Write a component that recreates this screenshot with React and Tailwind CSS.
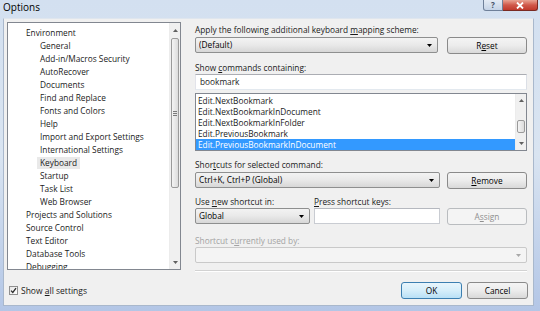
import React from "react";

const U = ({ children }) => <span className="underline underline-offset-[1px] decoration-[0.8px]">{children}</span>;

function Tri({ up = false, color = "#000" }) {
  return (
    <svg width="5" height="3" viewBox="0 0 5 3" className="block">
      <path d={up ? "M0 3H5L2.5 0Z" : "M0 0H5L2.5 3Z"} fill={color} />
    </svg>
  );
}

function Combo({ className = "", children, disabled = false }) {
  const base = disabled
    ? "border-[#c9c9c9] bg-[#f4f4f4] text-[#9a9a9a]"
    : "border-[#8e8f8f] bg-gradient-to-b from-[#f3f3f3] via-[#e9e9e9] to-[#d7d7d7] text-black";
  return (
    <div className={"flex items-center h-[16px] rounded-[2px] border pl-[3px] pr-[5px] " + base + " " + className}>
      <span className="flex-1 truncate leading-[14px]">{children}</span>
      <Tri color={disabled ? "#a8a8a8" : "#000"} />
    </div>
  );
}

function Btn({ className = "", children, variant = "normal" }) {
  let cls = "border-[#8a8a8a] bg-gradient-to-b from-[#f4f4f4] via-[#ececec] to-[#d9d9d9] text-black";
  if (variant === "default") cls = "border-[#3c7fb1] bg-gradient-to-b from-[#e8f5fc] via-[#d6eefa] to-[#b9e0f6] text-black";
  if (variant === "disabled") cls = "border-[#b9bcbf] bg-[#f4f4f4] text-[#8f8f8f]";
  return (
    <div className={"flex items-center justify-center h-[17px] rounded-[3px] border leading-[14px] " + cls + " " + className}>
      {children}
    </div>
  );
}

function VScroll({ upH, downH, thumbTop, thumbH, grip = false }) {
  return (
    <div className="w-[11px] flex flex-col bg-[#f0f0f0] border-l border-[#ececec] shrink-0">
      <div className="flex items-center justify-center shrink-0" style={{ height: upH }}>
        <Tri up color="#606060" />
      </div>
      <div className="flex-1 relative">
        <div
          className="absolute left-[1px] right-[1px] rounded-[2px] border border-[#9a9a9a] bg-gradient-to-r from-[#f4f4f4] to-[#dcdcdc] flex items-center justify-center"
          style={{ top: thumbTop, height: thumbH }}
        >
          {grip && (
            <div className="flex flex-col gap-[1px]">
              <div className="w-[4px] h-[1px] bg-[#7a7a7a]" />
              <div className="w-[4px] h-[1px] bg-[#7a7a7a]" />
              <div className="w-[4px] h-[1px] bg-[#7a7a7a]" />
            </div>
          )}
        </div>
      </div>
      <div className="flex items-center justify-center shrink-0" style={{ height: downH }}>
        <Tri color="#606060" />
      </div>
    </div>
  );
}

const tree = [
  ["Environment", 0],
  ["General", 1],
  ["Add-in/Macros Security", 1],
  ["AutoRecover", 1],
  ["Documents", 1],
  ["Find and Replace", 1],
  ["Fonts and Colors", 1],
  ["Help", 1],
  ["Import and Export Settings", 1],
  ["International Settings", 1],
  ["Keyboard", 1],
  ["Startup", 1],
  ["Task List", 1],
  ["Web Browser", 1],
  ["Projects and Solutions", 0],
  ["Source Control", 0],
  ["Text Editor", 0],
  ["Database Tools", 0],
  ["Debugging", 0],
];

const cmds = [
  "Edit.NextBookmark",
  "Edit.NextBookmarkInDocument",
  "Edit.NextBookmarkInFolder",
  "Edit.PreviousBookmark",
  "Edit.PreviousBookmarkInDocument",
];

export default function App() {
  return (
    <div className="w-[540px] h-[311px] overflow-hidden flex flex-col bg-gradient-to-b from-[#d3e0f0] via-[#d9e4f1] to-[#b3c6e6] font-['Open_Sans',sans-serif] text-[8.3px] text-[#1a1a1a]">
      {/* title bar */}
      <div className="h-[18px] shrink-0 flex items-start">
        <span className="pl-[3px] pt-[1px] text-[10px] leading-[13px] text-black">Options</span>
        <div className="ml-auto flex mr-[2px]">
          <div className="w-[20px] h-[11px] rounded-bl-[3px] border border-t-0 border-[#6f8099] bg-gradient-to-b from-[#e4ebf4] to-[#c5d3e6] flex items-center justify-center text-[8px] leading-[8px] font-bold text-[#3f4f66]">
            ?
          </div>
          <div className="w-[35px] h-[11px] rounded-br-[3px] border border-l-0 border-t-0 border-[#7a2a22] bg-gradient-to-b from-[#e8a393] via-[#d0584a] to-[#c0392b] flex items-center justify-center">
            <svg width="8" height="7" viewBox="0 0 8 7">
              <path d="M1 0.5L7 6.5M7 0.5L1 6.5" stroke="#fff" strokeWidth="1.8" />
            </svg>
          </div>
        </div>
      </div>

      {/* client area */}
      <div className="ml-[3px] mr-[6px] h-[288px] shrink-0 bg-[#f0f0f0] border border-[#a9b8cc] border-t-[#dfe6ee] flex flex-col">
        <div className="flex pt-[3px] pl-[3px]">
          {/* tree */}
          <div className="w-[174px] h-[248px] border border-[#828790] bg-white flex overflow-hidden">
            <div className="flex-1 pt-[3px] overflow-hidden">
              {tree.map(([t, lvl]) => (
                <div key={t} className={"h-[13px] leading-[13px] " + (lvl ? "pl-[29px]" : "pl-[15px]")}>
                  <span className={"px-[3px] inline-block h-[12px] leading-[12px] " + (t === "Keyboard" ? "bg-[#e9e9e9]" : "")}>{t}</span>
                </div>
              ))}
            </div>
            <VScroll upH={14} downH={13} thumbTop={1} thumbH={150} grip />
          </div>

          {/* right panel */}
          <div className="ml-[14px] w-[332px] flex flex-col">
            <div className="mt-[2px] h-[11px] leading-[11px]">
              Apply the following additional keyboard <U>m</U>apping scheme:
            </div>
            <div className="mt-[2px] flex items-start">
              <Combo className="w-[243px]">(Default)</Combo>
              <Btn className="ml-[9px] w-[80px]">
                R<U>e</U>set
              </Btn>
            </div>
            <div className="mt-[8px] h-[11px] leading-[11px]">
              Show <U>c</U>ommands containing:
            </div>
            <div className="mt-[1px] h-[16px] border border-[#abadb3] border-l-[#e2e3ea] border-r-[#dbdfe6] border-b-[#e3e9ef] bg-white pl-[4px] leading-[14px]">
              bookmark
            </div>
            <div className="mt-[3px] h-[58px] border border-[#828790] bg-white flex overflow-hidden">
              <div className="flex-1 pt-[1px]">
                {cmds.map((c, i) => (
                  <div
                    key={c}
                    className={"h-[11px] leading-[11px] pl-[2px] " + (i === 4 ? "bg-[#3399ff] text-white" : "")}
                  >
                    {c}
                  </div>
                ))}
              </div>
              <VScroll upH={13} downH={13} thumbTop={13} thumbH={13} />
            </div>
            <div className="mt-[8px] h-[11px] leading-[11px]">
              Shor<U>t</U>cuts for selected command:
            </div>
            <div className="mt-[2px] flex items-start">
              <Combo className="w-[245px]">Ctrl+K, Ctrl+P (Global)</Combo>
              <Btn className="ml-[7px] w-[80px]">
                <U>R</U>emove
              </Btn>
            </div>
            <div className="mt-[7px] h-[11px] leading-[11px] flex">
              <span className="w-[119px]">
                Use <U>n</U>ew shortcut in:
              </span>
              <span>
                <U>P</U>ress shortcut keys:
              </span>
            </div>
            <div className="mt-[1px] flex items-start">
              <Combo className="w-[115px]">Global</Combo>
              <div className="ml-[4px] w-[126px] h-[16px] border border-[#c9ccd2] border-t-[#b5b8bf] bg-white" />
              <Btn variant="disabled" className="ml-[7px] w-[80px] h-[16px]">
                A<U>s</U>sign
              </Btn>
            </div>
            <div className="mt-[10px] h-[11px] leading-[11px] text-[#a3a3a3]">
              Shortcut c<U>u</U>rrently used by:
            </div>
            <div className="mt-[1px]">
              <Combo disabled className="w-[332px]"> </Combo>
            </div>
            <div className="mt-[7px] h-[2px] border-t border-[#d2d2d2] border-b border-b-white" />
          </div>
        </div>

        {/* bottom row */}
        <div className="mt-[10px] flex items-center pl-[5px] pr-[5px]">
          <div className="w-[9px] h-[9px] border border-[#8f8f8f] bg-gradient-to-br from-[#e6e6e6] to-white flex items-center justify-center">
            <svg width="7" height="7" viewBox="0 0 7 7">
              <path d="M1 3.6L2.8 5.4L6 1.2" stroke="#2a2a2a" strokeWidth="1.3" fill="none" />
            </svg>
          </div>
          <span className="ml-[3px] text-[8.5px] leading-[12px]">
            Show <U>a</U>ll settings
          </span>
          <div className="ml-auto flex gap-[5px]">
            <Btn variant="default" className="w-[61px]">
              OK
            </Btn>
            <Btn className="w-[61px]">Cancel</Btn>
          </div>
        </div>
      </div>
    </div>
  );
}
